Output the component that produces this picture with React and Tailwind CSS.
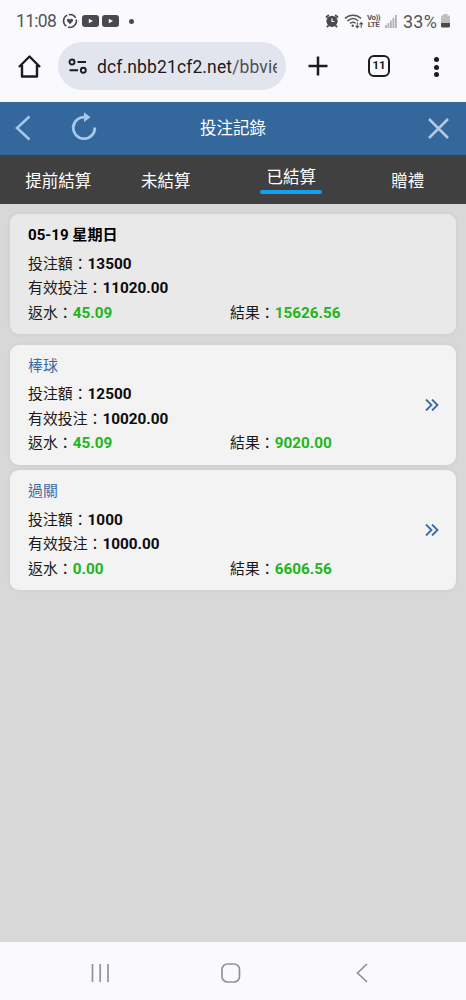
import { useState } from "react";

const tabs = [
  { id: "early", label: "提前結算", pad: "" },
  { id: "open", label: "未結算", pad: "pr-[18px]" },
  { id: "settled", label: "已結算", pad: "" },
  { id: "gift", label: "贈禮", pad: "" },
];

const summary = { title: "05-19 星期日", amount: "13500", valid: "11020.00", rebate: "45.09", result: "15626.56" };

const records = [
  { title: "棒球", amount: "12500", valid: "10020.00", rebate: "45.09", result: "9020.00" },
  { title: "過關", amount: "1000", valid: "1000.00", rebate: "0.00", result: "6606.56" },
];

function YoutubeIcon() {
  return (
    <svg className="w-[17px] h-[12px]" viewBox="0 0 17 12">
      <rect width="17" height="12" rx="3" fill="#4a4a4d" />
      <path d="M6.8 3.7 11 6 6.8 8.3z" fill="#fff" />
    </svg>
  );
}

function StatusBar() {
  return (
    <div className="h-[42px] flex items-center justify-between pl-4 pr-[16px] text-[#555559]">
      <div className="flex items-center">
        <span className="w-[46px] text-[17.5px] tracking-[-0.7px]">11:08</span>
        <svg className="w-4 h-4" viewBox="0 0 16 16" fill="none" stroke="#4a4a4d" strokeWidth="1.6">
          <path d="M5.2 2.1A6.4 6.4 0 0 0 4.4 13.2M6 14.1A6.4 6.4 0 0 0 14.2 6.5M13.6 4.9A6.4 6.4 0 0 0 6.8 1.7" />
          <path d="M8 11.2 5.2 8.2C4 6.7 6.2 4.6 8 6.4 9.8 4.6 12 6.7 10.8 8.2z" fill="#4a4a4d" stroke="none" />
        </svg>
        <div className="flex gap-[3px] ml-1">
          <YoutubeIcon />
          <YoutubeIcon />
        </div>
        <span className="w-[5px] h-[5px] rounded-full bg-[#4a4a4d] ml-[10px]" />
      </div>
      <div className="flex items-center">
        {/* alarm */}
        <svg className="w-[14px] h-[14px]" viewBox="0 0 14 14">
          <path d="M3.8 1 1 3.6M10.2 1 13 3.6M3.4 11.5 2 13.2M10.6 11.5 12 13.2" stroke="#4a4a4d" strokeWidth="1.9" />
          <circle cx="7" cy="7.3" r="5.6" fill="#4a4a4d" />
          <path d="M7 4.5v3h2.4" stroke="#fff" strokeWidth="1.2" fill="none" />
        </svg>
        {/* wifi */}
        <svg className="w-[20px] h-[15px] ml-[5px]" viewBox="0 0 20 15" fill="none" stroke="#555559" strokeWidth="1.5">
          <path d="M1 4.4C5.5 .1 12.5 .1 17 4.4M3.5 7.100C7 3.900 11 3.900 14.300 7M6 9.500C7.800 7.900 10 7.900 11.600 9.300" />
          <circle cx="8.700" cy="11.700" r="1.200" fill="#555559" stroke="none" />
          <path d="M13.300 8.500v5M11.500 11.900l1.800 1.900 1.800-1.900M17.200 13.800v-5M15.500 10.300l1.700-1.800 1.700 1.800" strokeWidth="1.100" />
        </svg>
        <span className="w-[15px] ml-[2px] text-[8px] leading-[7.500px] font-bold tracking-[-0.500px] text-center">
          <span className="block">Vo))</span>
          <span className="block">LTE</span>
        </span>
        {/* signal */}
        <svg className="w-[12px] h-[13px] ml-[4px]" viewBox="0 0 12 13" fill="#b2b2b6">
          <path d="M0 10h1.800v3H0zM2.500 8h1.800v5H2.500zM5 5.500h1.800V13H5zM7.500 3h1.800v10H7.500zM10 0h1.800v13H10z" />
        </svg>
        <span className="w-[36px] ml-[6px] text-[18px] tracking-[0.200px]">33%</span>
        {/* battery */}
        <svg className="w-[9px] h-[14px] ml-[2px]" viewBox="0 0 9 14">
          <path d="M2.500 0h4v1.500H8q1 0 1 1V9H0V2.500q0-1 1-1h1.500z" fill="#bebec0" />
          <path d="M0 9h9v3q0 1.500-1.500 1.500h-6Q0 13.500 0 12z" fill="#4a4a4d" />
        </svg>
      </div>
    </div>
  );
}

function BrowserBar() {
  return (
    <div className="h-[60px] flex items-start pl-[18px] text-[#1b1b20]">
      <svg className="w-[23px] h-[24px] mt-[12px]" viewBox="0 0 23 24" fill="none" stroke="#1b1b20" strokeWidth="2.400" strokeLinejoin="round">
        <path d="M1 13 11.500 2.500 22 13M4 11V22.500h15V11" />
      </svg>
      <div className="w-[228px] h-[48px] ml-[17px] rounded-full bg-[#e2e5ee] flex items-center pl-[10px] pr-[9px]">
        <svg className="w-5 h-4 shrink-0" viewBox="0 0 20 16" fill="none" stroke="#1b1b20" strokeWidth="1.900">
          <circle cx="4" cy="4" r="2.500" />
          <path d="M9.500 4H18M1.500 12.300H10" />
          <circle cx="15.300" cy="12.300" r="2.500" />
        </svg>
        <div className="w-[180px] ml-[9px] mt-[2px] overflow-hidden whitespace-nowrap text-[17.500px] tracking-[0.130px]">
          dcf.nbb21cf2.net<span className="text-[#505158]">/bbvie</span>
        </div>
      </div>
      <svg className="w-5 h-5 ml-[22px] mt-[14px]" viewBox="0 0 20 20" stroke="#1b1b20" strokeWidth="2.500">
        <path d="M10 .5v19M.5 10h19" />
      </svg>
      <div className="w-[22px] h-[22px] ml-[40px] mt-[13px] rounded-[6px] border-[2.500px] border-[#1b1b20] flex items-center justify-center text-[11.500px] font-bold">
        11
      </div>
      <div className="flex flex-col gap-[2.500px] ml-[44px] mt-[15px]">
        <span className="w-[5px] h-[5px] rounded-full bg-[#1b1b20]" />
        <span className="w-[5px] h-[5px] rounded-full bg-[#1b1b20]" />
        <span className="w-[5px] h-[5px] rounded-full bg-[#1b1b20]" />
      </div>
    </div>
  );
}

function Header() {
  return (
    <header className="h-[53px] bg-[#34689c] flex items-center justify-between pl-[15px] pr-[17px]">
      <div className="w-[100px] flex items-center -mt-[2px]">
        <svg className="w-[16px] h-[26px]" viewBox="0 0 16 26" fill="none" stroke="#a6c8ee" strokeWidth="2.500">
          <path d="M14.500 1.500 2 13l12.500 11.500" />
        </svg>
        <svg className="w-[26px] h-[28px] ml-[40px] -mt-[3px]" viewBox="0 0 26 28" fill="none" stroke="#a6c8ee" strokeWidth="2.800">
          <path d="M14.500 5.200A10.800 10.800 0 1 0 23.800 15.500" />
          <path d="M13 .3 19.500 5.200 13 10z" fill="#a6c8ee" stroke="none" />
        </svg>
      </div>
      <h1 className="text-[16.500px] text-white pl-[2px] pt-[1px]">投注記錄</h1>
      <div className="w-[100px] flex justify-end">
        <svg className="w-[21px] h-[21px]" viewBox="0 0 21 21" stroke="#b3c9e6" strokeWidth="2.500">
          <path d="M1 1l19 19M20 1 1 20" />
        </svg>
      </div>
    </header>
  );
}

function Field({ label, value, green }) {
  return (
    <div>
      {label}：<b className={green ? "text-[15.300px] text-[#22b51e]" : "text-[15.300px] text-[#0c0c0c]"}>{value}</b>
    </div>
  );
}

function RecordCard({ item, isSummary }) {
  return (
    <article
      className={`h-[120px] rounded-[9px] pl-[18px] pr-[17px] pt-[9px] flex items-center shadow-[0_0_4px_1px_rgba(0,0,0,0.04)] ${
        isSummary ? "bg-[#e9e9e9]" : "bg-[#f3f3f3]"
      }`}
    >
      <div className="flex-1 h-full text-[14.900px] leading-[24.700px] text-[#1a1a1a]">
        <h2 className={`h-[28.500px] ${isSummary ? "text-[15.100px] font-bold text-black" : "text-[#3c6ba3]"}`}>{item.title}</h2>
        <Field label="投注額" value={item.amount} />
        <Field label="有效投注" value={item.valid} />
        <div className="flex">
          <div className="w-[202px]">
            <Field label="返水" value={item.rebate} green />
          </div>
          <Field label="結果" value={item.result} green />
        </div>
      </div>
      {!isSummary && (
        <svg className="w-[14px] h-[12px] -mt-[9px]" viewBox="0 0 14 12" fill="none" stroke="#376a9f" strokeWidth="1.800">
          <path d="M1 .5 6.500 6 1 11.500M7 .5 12.500 6 7 11.500" />
        </svg>
      )}
    </article>
  );
}

function NavBar() {
  return (
    <footer className="h-[58px] bg-[#fafafe] flex items-center pl-[91px] pt-[3px]">
      <svg className="w-[19px] h-[20px]" viewBox="0 0 19 20" stroke="#929296" strokeWidth="1.700">
        <path d="M1.500 1v18M9.200 1v18M17 1v18" />
      </svg>
      <svg className="w-[20px] h-[20px] ml-[111px]" viewBox="0 0 20 20" fill="none" stroke="#929296" strokeWidth="1.700">
        <rect x="1" y="1" width="17.500" height="18" rx="5.500" />
      </svg>
      <svg className="w-[12px] h-[20px] ml-[115px]" viewBox="0 0 12 20" fill="none" stroke="#929296" strokeWidth="1.700">
        <path d="M11 1 1.500 10 11 19" />
      </svg>
    </footer>
  );
}

export default function App() {
  const [active, setActive] = useState("settled");

  return (
    <div className="w-[466px] h-[1000px] overflow-hidden flex flex-col bg-[#fafafe] font-[Roboto,'Noto_Sans_CJK_TC',sans-serif]">
      <StatusBar />
      <BrowserBar />
      <Header />

      {/* tabs */}
      <nav className="h-[49px] bg-[#404040] grid grid-cols-4 text-[16.500px] text-white">
        {tabs.map((tab) => (
          <button
            key={tab.id}
            onClick={() => setActive(tab.id)}
            className={`flex flex-col items-center justify-center whitespace-nowrap pt-[4px] ${tab.pad}`}
          >
            <span className="leading-[24px]">{tab.label}</span>
            {active === tab.id && <span className="w-[62px] h-[4px] mb-[4px] rounded-full bg-[#12a0ee]" />}
          </button>
        ))}
      </nav>

      <main className="flex-1 bg-[#d8d8d8] px-[10px] pt-[10px]">
        <RecordCard item={summary} isSummary />
        <div className="flex flex-col gap-[5.500px] mt-[10.500px]">
          {records.map((item) => (
            <RecordCard key={item.title} item={item} />
          ))}
        </div>
      </main>

      <NavBar />
    </div>
  );
}
